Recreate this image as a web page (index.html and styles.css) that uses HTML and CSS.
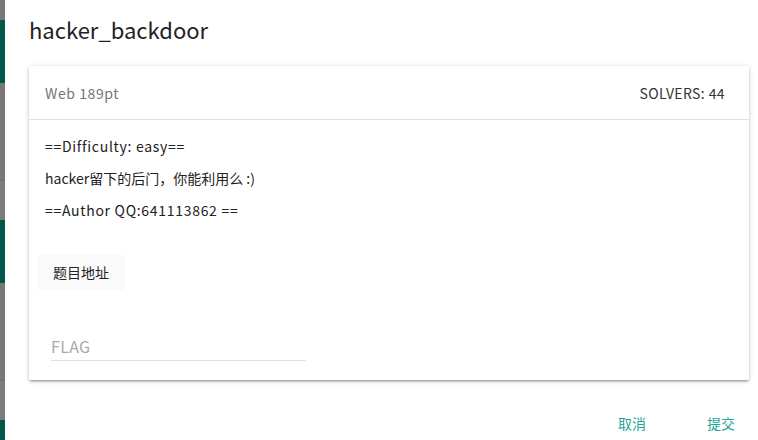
FILE: index.html
```html
<!DOCTYPE html>
<html>
<head>
<meta charset="utf-8">
<link rel="stylesheet" href="styles.css">
</head>
<body>
<div class="page">
  <div class="behind">
    <div class="b gray h20"></div>
    <div class="b green h63"></div>
    <div class="b gray h97"></div>
    <div class="b gray2 h40"></div>
    <div class="b green h63"></div>
    <div class="b gray h97"></div>
    <div class="b gray2 h40"></div>
    <div class="b green h20"></div>
  </div>
  <div class="modal">
    <h4 class="title">hacker_backdoor</h4>
    <div class="card">
      <div class="card-head">
        <span class="cat">Web 189pt</span>
        <span class="solvers">SOLVERS: 44</span>
      </div>
      <div class="card-body">
        <p class="latin">==Difficulty: easy==</p>
        <p>hacker留下的后门，你能利用么 :)</p>
        <p class="latin">==Author QQ:641113862 ==</p>
        <div class="btn-row"><span class="btn-flat">题目地址</span></div>
        <div class="field"><span class="placeholder">FLAG</span></div>
      </div>
    </div>
    <div class="footer">
      <span class="act">取消</span>
      <span class="act">提交</span>
    </div>
  </div>
</div>
</body>
</html>
```

FILE: styles.css
```css
html, body {
  margin: 0;
  padding: 0;
  height: 100%;
  overflow: hidden;
  background: #fff;
  font-family: "Noto Sans CJK SC", "Noto Sans", sans-serif;
}
.page {
  display: flex;
  height: 440px;
}
.behind {
  width: 5px;
  flex: none;
  display: flex;
  flex-direction: column;
  overflow: hidden;
}
.b { flex: none; }
.gray { background: #787878; }
.gray2 { background: #7c7c7c; border-top: 1px solid #6f6f6f; box-sizing: border-box; }
.green { background: #00574b; }
.h20 { height: 20px; }
.h63 { height: 63px; }
.h97 { height: 97px; }
.h40 { height: 40px; }
.modal {
  flex: 1;
  padding: 0 9px 0 24px;
  display: flex;
  flex-direction: column;
}
.title {
  margin: 10px 0 0;
  font-size: 22px;
  font-weight: 400;
  line-height: 38px;
  color: #222;
  height: 56px;
}
.card {
  background: #fff;
  box-shadow: 0 2px 2px 0 rgba(0,0,0,.14), 0 3px 1px -2px rgba(0,0,0,.12), 0 1px 5px 0 rgba(0,0,0,.2);
  border-radius: 2px;
  height: 314px;
  box-sizing: border-box;
}
.card-head {
  height: 54px;
  box-sizing: border-box;
  border-bottom: 1px solid #e0e0e0;
  display: flex;
  justify-content: space-between;
  align-items: center;
  padding: 0 24px 0 16px;
  font-size: 14px;
}
.cat { color: #757575; letter-spacing: 0.6px; }
.solvers { color: #333; letter-spacing: 0.4px; }
.card-body {
  padding: 17px 16px 0 16px;
  font-size: 14px;
  color: #222;
}
.card-body p {
  margin: 0 0 13px;
  line-height: 19px;
}
.card-body p.latin { letter-spacing: 0.7px; }
.btn-row {
  margin: 35px 0 0 -8px;
}
.btn-flat {
  display: inline-block;
  background: #fafafa;
  height: 35px;
  line-height: 35px;
  padding: 0 16px;
  font-size: 14px;
  color: #222;
  border-radius: 2px;
}
.field {
  margin: 41px 0 0 6px;
  width: 255px;
  height: 30px;
  border-bottom: 1px solid #e0e0e0;
  box-sizing: border-box;
  display: flex;
  align-items: flex-end;
}
.placeholder {
  font-size: 16px;
  color: #a8a8a8;
  line-height: 24px;
  padding-bottom: 2px;
  letter-spacing: 0.3px;
}
.footer {
  display: flex;
  justify-content: flex-end;
  gap: 61px;
  padding: 33px 14px 0 0;
}
.act {
  font-size: 14px;
  color: #26a69a;
  line-height: 20px;
}
```
